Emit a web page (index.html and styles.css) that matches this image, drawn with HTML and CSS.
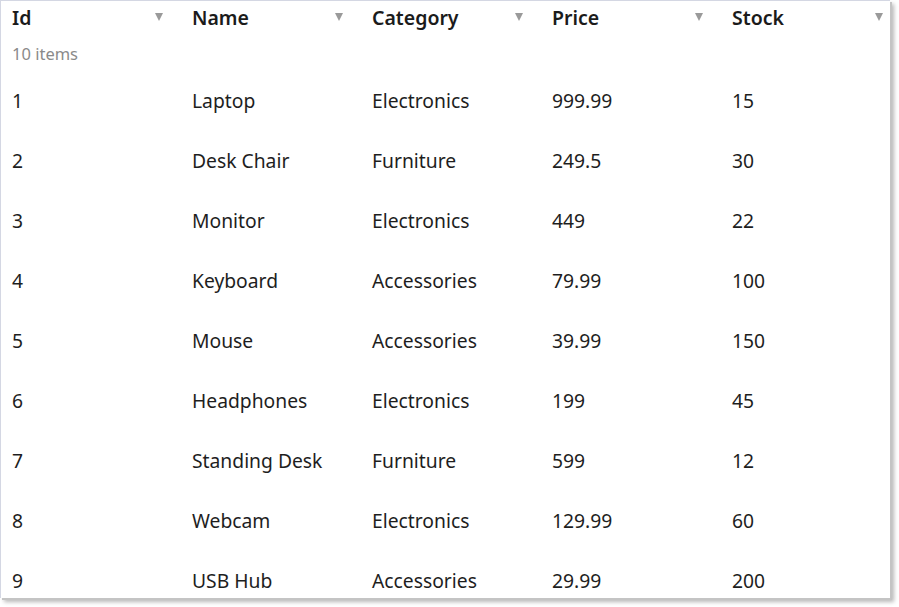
FILE: index.html
```html
<!DOCTYPE html>
<html>
<head>
<meta charset="utf-8">
<link rel="stylesheet" href="styles.css">
</head>
<body>
<div class="grid-frame">
  <div class="head">
    <div class="hcell"><span>Id</span><i class="arrow"></i></div>
    <div class="hcell"><span>Name</span><i class="arrow"></i></div>
    <div class="hcell"><span>Category</span><i class="arrow"></i></div>
    <div class="hcell"><span>Price</span><i class="arrow"></i></div>
    <div class="hcell"><span>Stock</span><i class="arrow"></i></div>
  </div>
  <div class="count">10 items</div>
  <div class="rows">
    <div class="row"><div>1</div><div>Laptop</div><div>Electronics</div><div>999.99</div><div>15</div></div>
    <div class="row"><div>2</div><div>Desk Chair</div><div>Furniture</div><div>249.5</div><div>30</div></div>
    <div class="row"><div>3</div><div>Monitor</div><div>Electronics</div><div>449</div><div>22</div></div>
    <div class="row"><div>4</div><div>Keyboard</div><div>Accessories</div><div>79.99</div><div>100</div></div>
    <div class="row"><div>5</div><div>Mouse</div><div>Accessories</div><div>39.99</div><div>150</div></div>
    <div class="row"><div>6</div><div>Headphones</div><div>Electronics</div><div>199</div><div>45</div></div>
    <div class="row"><div>7</div><div>Standing Desk</div><div>Furniture</div><div>599</div><div>12</div></div>
    <div class="row"><div>8</div><div>Webcam</div><div>Electronics</div><div>129.99</div><div>60</div></div>
    <div class="row"><div>9</div><div>USB Hub</div><div>Accessories</div><div>29.99</div><div>200</div></div>
  </div>
</div>
</body>
</html>
```
FILE: styles.css
```css
html, body {
  margin: 0;
  padding: 0;
  background: #ffffff;
}
body {
  font-family: "Noto Sans", "Open Sans", sans-serif;
  color: #1a1a1a;
  width: 899px;
  height: 607px;
}
.grid-frame {
  width: 889px;
  height: 597px;
  border-top: 1px solid #d4d7e3;
  border-left: 1px solid #d4d7e3;
  box-shadow: 2px 2px 0 #c4c4c4, 4px 4px 4px rgba(0, 0, 0, 0.28);
  overflow: hidden;
  background: #fff;
}
.head, .row {
  display: grid;
  grid-template-columns: repeat(5, 180px);
  width: 900px;
}
.head {
  height: 33px;
  align-items: center;
}
.hcell {
  display: flex;
  align-items: center;
  justify-content: space-between;
  padding: 0 18px 0 11px;
  font-size: 19.5px;
  font-weight: 600;
  color: #1b1b1b;
}
.arrow {
  width: 0;
  height: 0;
  border-left: 4.5px solid transparent;
  border-right: 4.5px solid transparent;
  border-top: 8px solid #9a9a9a;
  margin-top: -2px;
}
.count {
  height: 36px;
  line-height: 40px;
  padding-left: 11px;
  font-size: 16.5px;
  color: #8a8a8a;
}
.row {
  height: 60px;
  align-items: center;
  font-size: 19.3px;
  color: #1e1e1e;
}
.row > div {
  padding-left: 11px;
}
```
